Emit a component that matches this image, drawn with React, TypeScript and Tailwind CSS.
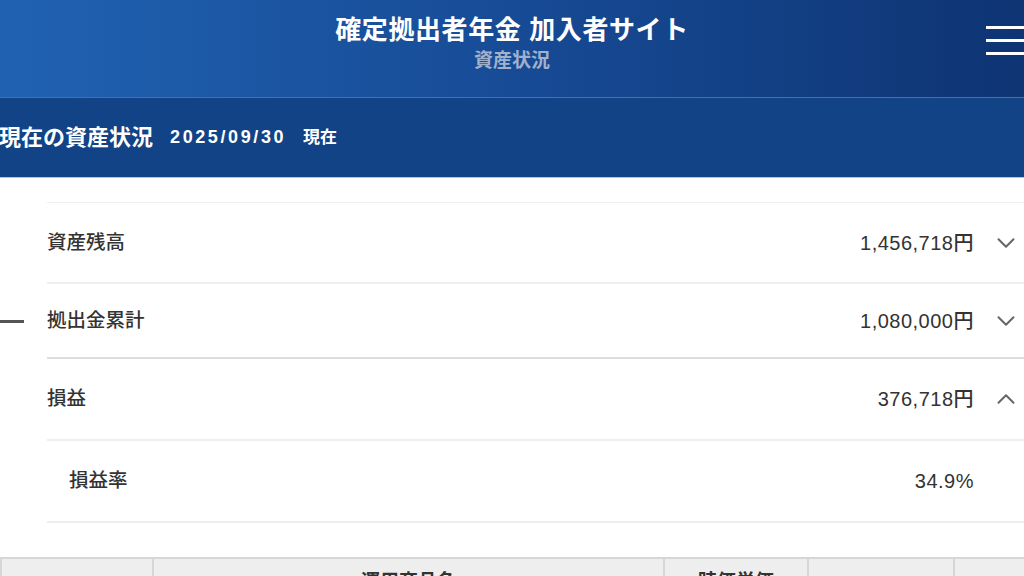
import { ChevronDown, ChevronUp } from "lucide-react"

const font = { fontFamily: '"Liberation Sans", "Noto Sans CJK JP", sans-serif' }

export default function App() {
  const rows = [
    { label: "資産残高", value: "1,456,718円", icon: "down", h: "h-[81px]", border: "border-[#eeeeee]" },
    { label: "拠出金累計", value: "1,080,000円", icon: "down", h: "h-[75px]", border: "border-[#dddddd]", dash: true },
    { label: "損益", value: "376,718円", icon: "up", h: "h-[82px]", border: "border-[#eeeeee]" },
    { label: "損益率", value: "34.9%", icon: "none", h: "h-[82px]", border: "border-[#eeeeee]", indent: true },
  ]
  const cols = ["", "運用商品名", "時価単価", "", ""]
  return (
    <div className="w-[1024px] h-[576px] overflow-hidden bg-white" style={font}>
      <header className="h-[98px] grid grid-cols-[1fr_auto_1fr] bg-gradient-to-r from-[#2062b2] via-[#174b96] to-[#0e3473] border-b border-[#4d6f9f]">
        <div />
        <div className="flex flex-col items-center pt-[12px]">
          <h1 className="text-[26px] leading-[36px] font-bold text-white tracking-[0.6px]">確定拠出者年金 加入者サイト</h1>
          <p className="text-[19px] leading-[24px] font-bold text-[#a0b1cb] mt-[1px]">資産状況</p>
        </div>
        <div className="flex justify-end pt-[26px]">
          <div className="flex flex-col gap-[10px] w-[40px] -mr-[2px]">
            <span className="h-[3px] bg-white" />
            <span className="h-[3px] bg-white" />
            <span className="h-[3px] bg-white" />
          </div>
        </div>
      </header>
      <section className="h-[80px] flex items-center bg-[#124386] border-b border-[#b8c6da] text-white font-bold">
        <h2 className="text-[22px] -ml-[1px]">現在の資産状況</h2>
        <span className="text-[18px] tracking-[2.6px] ml-[17px]">2025/09/30</span>
        <span className="text-[17px] ml-[17px]">現在</span>
      </section>
      <div className="pt-[24px]">
        <div className="ml-[47px] border-t border-[#eeeeee]" />
        {rows.map((r) => (
          <div key={r.label} className="flex">
            <div className="w-[47px] flex items-center">
              {r.dash && <span className="w-[24px] h-[3px] bg-[#555555]" />}
            </div>
            <div className={`flex-1 flex items-center border-b-2 ${r.h} ${r.border} text-[#333333] font-medium`}>
              <span className={`text-[19.5px] ${r.indent ? "pl-[22px]" : ""}`}>{r.label}</span>
              <span className="ml-auto text-[20px] tracking-[0.5px]">{r.value}</span>
              <span className="w-[50px] flex justify-end pr-[3px] text-[#666666]">
                {r.icon === "down" && <ChevronDown size={30} strokeWidth={1.6} />}
                {r.icon === "up" && <ChevronUp size={30} strokeWidth={1.6} />}
              </span>
            </div>
          </div>
        ))}
      </div>
      <div className="mt-[34px] grid grid-cols-[152px_511px_144px_146px_1fr] border-t-2 border-[#d6d6d6] bg-[#eeeeee] h-[40px]">
        {cols.map((c, i) => (
          <div key={i} className="border-l-2 border-[#d6d6d6] flex justify-center pt-[11px] text-[19px] leading-[24px] font-bold text-[#333333]">
            {c}
          </div>
        ))}
      </div>
    </div>
  )
}
